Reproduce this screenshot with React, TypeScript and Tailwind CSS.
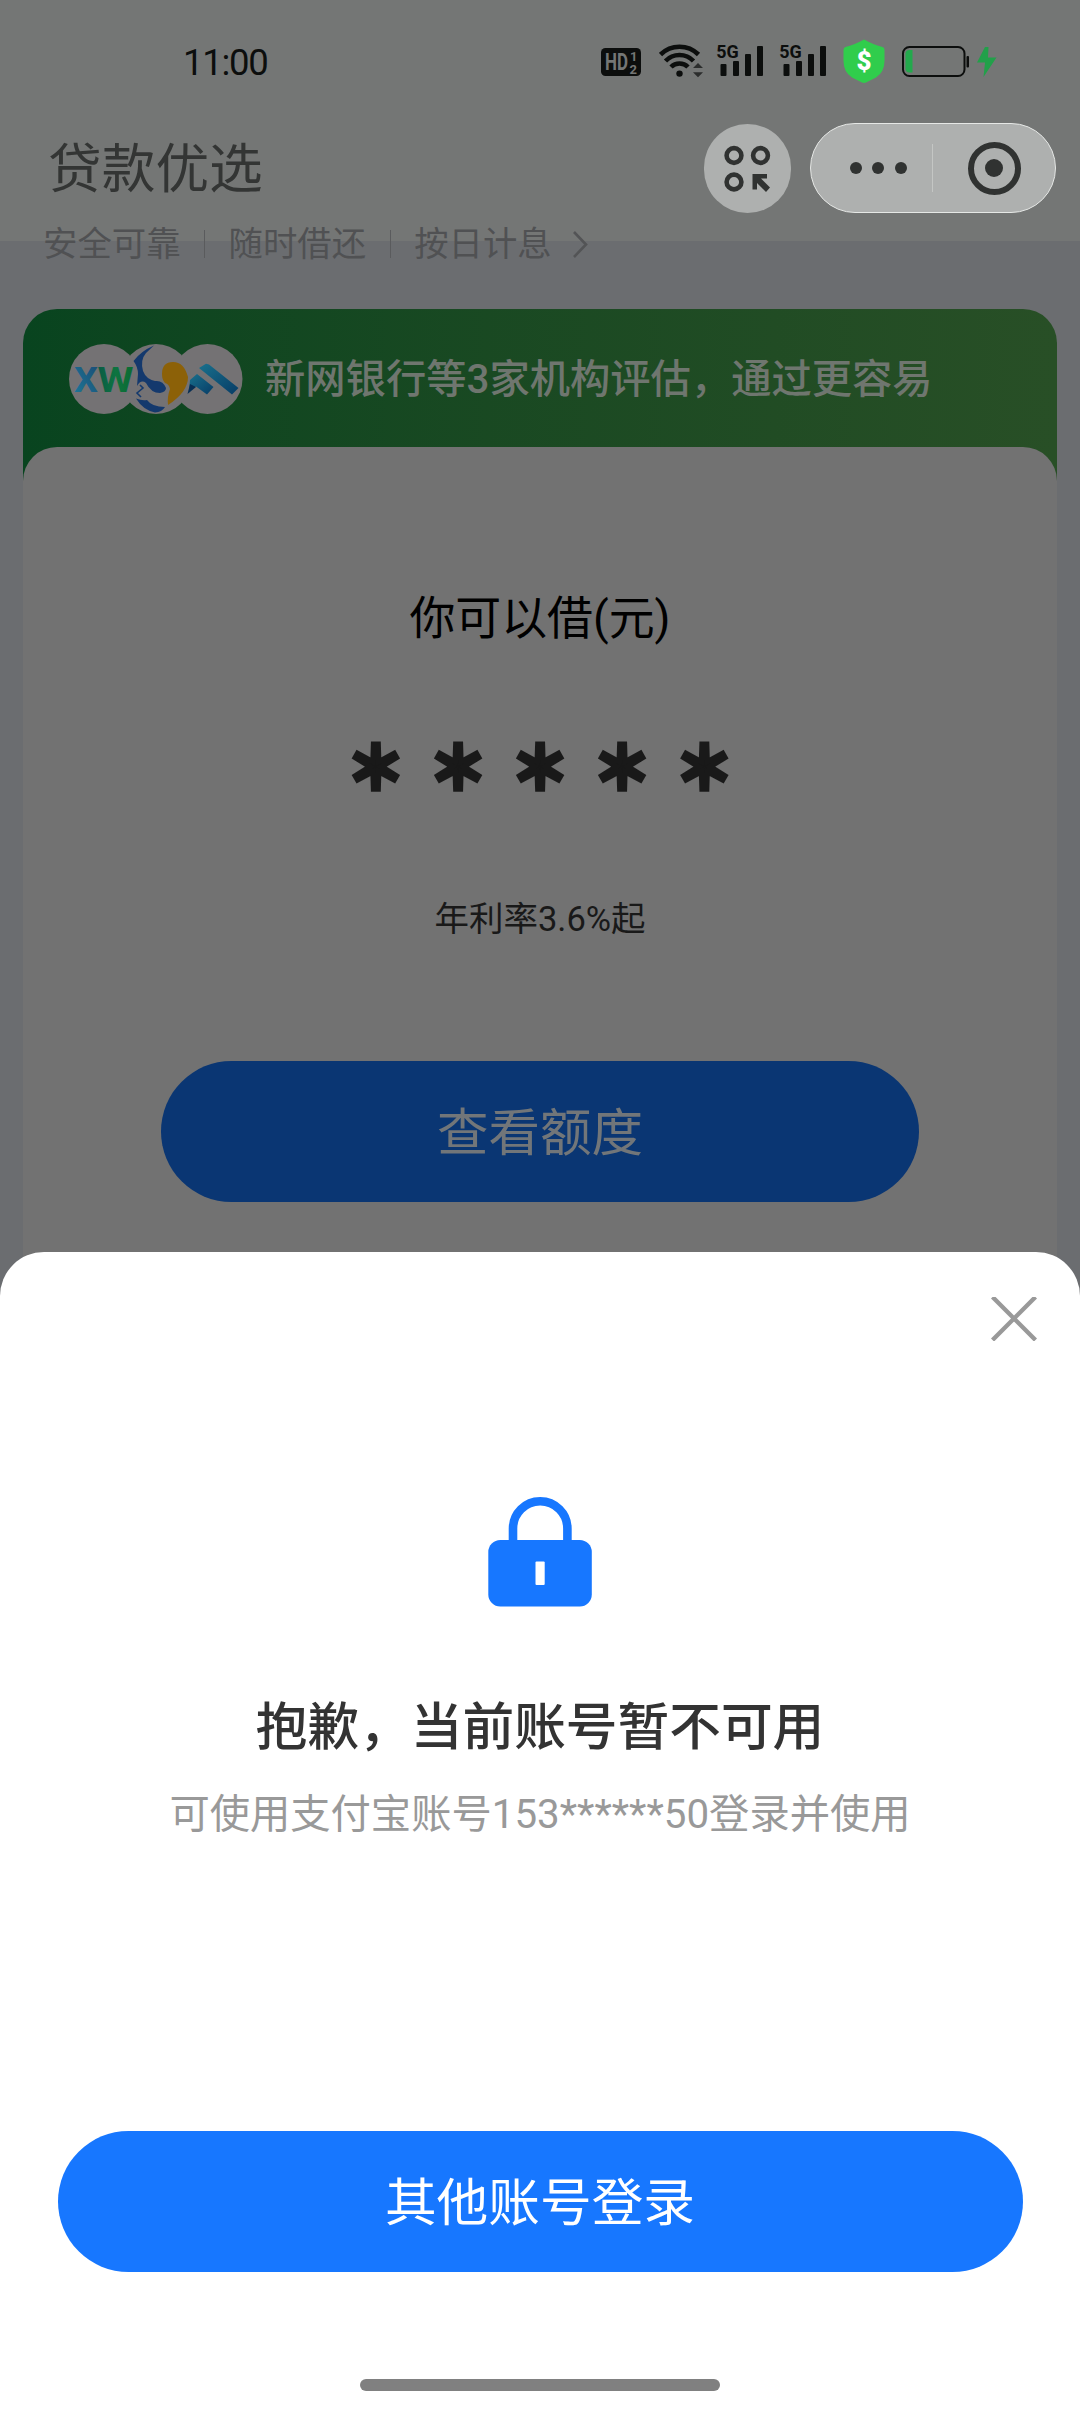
import React from 'react';

const INK = '#0c0e0d';

function HdIcon() {
  return (
    <svg className="h-[52px] w-[40px]" viewBox="0 0 40 52">
      <rect x="0" y="12" width="40" height="28" rx="4.5" fill={INK} />
      <text x="4" y="34" fontSize="23" fontWeight="700" fill="#747675" fontFamily="Roboto" textLength="23" lengthAdjust="spacingAndGlyphs">HD</text>
      <text x="29" y="25" fontSize="13" fontWeight="700" fill="#747675" fontFamily="Roboto">1</text>
      <text x="28.5" y="37.5" fontSize="13" fontWeight="700" fill="#747675" fontFamily="Roboto">2</text>
    </svg>
  );
}

function WifiIcon() {
  return (
    <svg className="ml-[18px] h-[52px] w-[44px]" viewBox="659 36 44 52" fill="none" stroke={INK}>
      <path d="M660.5 54.5 A27 27 0 0 1 698.5 54.5" strokeWidth="4.6" />
      <path d="M665.5 61 A19.5 19.5 0 0 1 693.5 61" strokeWidth="4.6" />
      <path d="M671 67 A12 12 0 0 1 688 67" strokeWidth="4.6" />
      <circle cx="679.5" cy="73.6" r="3.2" fill={INK} stroke="none" />
      <path d="M693 68 l5 -5 l5 5z M693 72.3 l5 5 l5 -5z" fill="#2b2d2c" stroke="none" />
    </svg>
  );
}

function SignalIcon() {
  return (
    <svg className="h-[52px] w-[47px]" viewBox="716 36 47 52" fill={INK}>
      <text x="716.3" y="58" fontSize="19" fontWeight="700" fontFamily="Roboto" textLength="22.5" lengthAdjust="spacingAndGlyphs">5G</text>
      <rect x="720.5" y="64" width="6" height="12" rx="1" />
      <rect x="733" y="61" width="6" height="15" rx="1" />
      <rect x="745" y="54" width="6" height="22" rx="1" />
      <rect x="757" y="46" width="6" height="30" rx="1" />
    </svg>
  );
}

function ShieldIcon() {
  return (
    <svg className="ml-[17px] h-[52px] w-[42px]" viewBox="843 36 42 52">
      <path d="M864 39.5 Q874 45 882.5 47 Q884.5 47.6 884.5 50 V61 Q884.5 72 876 77.5 L866 82.5 Q864 83.4 862 82.5 L852 77.5 Q843.5 72 843.5 61 V50 Q843.5 47.6 845.5 47 Q854 45 864 39.5Z" fill="#30cd4c" />
      <text x="864" y="69.5" textAnchor="middle" fontSize="26" fontWeight="900" fill="#fff" fontFamily="Roboto">$</text>
    </svg>
  );
}

function BatteryIcon() {
  return (
    <svg className="ml-[16px] h-[52px] w-[98px]" viewBox="901 36 98 52">
      <rect x="903" y="47" width="61.5" height="29" rx="6.5" fill="none" stroke={INK} strokeWidth="2" />
      <rect x="966.5" y="56" width="2.5" height="11.5" rx="1" fill={INK} />
      <path d="M912.5 50 V72.5 H909.5 Q905.5 72.5 905.5 68.5 V54 Q905.5 50 909.5 50Z" fill="#23a94c" />
      <path d="M985 47 L977 62.5 H985 L983.5 77 L996.5 57.5 H988 L988.5 47Z" fill="#22a04a" />
    </svg>
  );
}

function StatusBar() {
  return (
    <div className="flex h-[88px] pt-[36px] pl-[183px]">
      <div className="h-[52px] w-[418px] text-[36.5px] leading-[54px] tracking-[-1.3px] text-[#0c0e0d]">11:00</div>
      <HdIcon />
      <WifiIcon />
      <div className="ml-[13px] flex gap-[16px]">
        <SignalIcon />
        <SignalIcon />
      </div>
      <ShieldIcon />
      <BatteryIcon />
    </div>
  );
}

function NavBar() {
  return (
    <div className="mt-[35px] flex h-[90px] items-center pr-[24px] pl-[48px]">
      <h1 className="flex-1 pt-[3px] text-[53.7px] leading-[60px] font-normal text-[#333534]">贷款优选</h1>
      <button className="h-[89px] w-[87px] rounded-full bg-[#aeb0af]">
        <svg className="h-[89px] w-[87px]" viewBox="704.5 123 87 89" fill="none" stroke="#303231" strokeWidth="4.6">
          <circle cx="734.5" cy="154.5" r="7.4" />
          <circle cx="761" cy="154.5" r="7.4" />
          <circle cx="734.5" cy="181" r="7.4" />
          <path d="M753 173 H767.5 V177.5 H761.5 L770.5 186.5 L766.5 191 L757.5 182 V188.5 H753Z" fill="#303231" stroke="none" />
        </svg>
      </button>
      <div className="ml-[19px] flex h-[90px] w-[246px] items-center rounded-full border border-[#e6e8e6] bg-[#aeb0af]">
        <div className="flex w-[121px] justify-center gap-[10.5px] pl-[13px]">
          <span className="size-[12px] rounded-full bg-[#303231]" />
          <span className="size-[12px] rounded-full bg-[#303231]" />
          <span className="size-[12px] rounded-full bg-[#303231]" />
        </div>
        <div className="h-[48px] w-px bg-[#c4c6c4]" />
        <div className="ml-[34.5px] flex size-[53px] items-center justify-center rounded-full border-[6px] border-[#303231]">
          <span className="size-[18px] rounded-full bg-[#303231]" />
        </div>
      </div>
    </div>
  );
}

function Tagline() {
  return (
    <div className="relative -mt-[17px] flex h-[40px] items-center pl-[43px] text-[34.4px] leading-[40px] text-[#505153]">
      <span>安全可靠</span>
      <span className="mx-[23.5px] h-[28px] w-px bg-[#5a5b5d]" />
      <span>随时借还</span>
      <span className="mx-[23.5px] h-[28px] w-px bg-[#5a5b5d]" />
      <span>按日计息</span>
      <svg className="ml-[20px] h-[28px] w-[16px]" viewBox="0 0 16 28" fill="none" stroke="#535456" strokeWidth="2.6">
        <path d="M2 2 L14 14.5 L2 27" />
      </svg>
    </div>
  );
}

function BankLogos() {
  return (
    <svg className="h-[70px] w-[174px]" viewBox="69 344 174 70">
      <defs>
        <linearGradient id="roof" x1="0" x2="1" y1="0" y2="1">
          <stop offset="0" stopColor="#19708c" />
          <stop offset="1" stopColor="#073c66" />
        </linearGradient>
        <linearGradient id="letterX" x1="0" x2="1" y1="1" y2="0">
          <stop offset="0" stopColor="#1d7a99" />
          <stop offset="1" stopColor="#1a4a74" />
        </linearGradient>
        <linearGradient id="letterW" x1="0" x2="1">
          <stop offset="0" stopColor="#0a5a45" />
          <stop offset="0.5" stopColor="#0d7440" />
          <stop offset="1" stopColor="#0c6a30" />
        </linearGradient>
      </defs>
      <circle cx="104" cy="379" r="35" fill="#747274" />
      <circle cx="207.5" cy="379" r="35" fill="#747274" />
      <circle cx="156" cy="379" r="35" fill="#747274" />
      <text x="74" y="391.5" fontSize="35" fontWeight="700" fontFamily="Roboto" fill="url(#letterX)" textLength="24" lengthAdjust="spacingAndGlyphs">X</text>
      <text x="97.5" y="391.5" fontSize="35" fontWeight="700" fontFamily="Roboto" fill="url(#letterW)" textLength="36" lengthAdjust="spacingAndGlyphs">W</text>
      <path d="M154 345.5 Q141 351 133.5 361 Q138 367 138 374 L137 386 Q141 379 146 383 Q151 393 160 393 Q166 392 166 388 Q163 380 155 381 Q146 379 143 371 Q140 360 146 353 Z" fill="#14396d" />
      <path d="M140 385 L143 388 L137 393 L141 397" stroke="#14396d" strokeWidth="1.6" fill="none" />
      <path d="M136 398.5 Q142 401 147 400 Q152 407 165 407 Q162 412 155 412.500 Q143 410 136 398.5Z" fill="#14396d" />
      <path d="M162 374 Q162 362 173 362 Q184 362 188 377 Q188 392 168 405 Q167 397 170 389 Q169 384 165 383 Q162 380 162 374Z" fill="#8c6108" />
      <path d="M199 368 L206 363.8 L209 364.500 L238.500 388 L232 394.500Z" fill="url(#roof)" />
      <path d="M190 380 L197 374 L213.500 387 L207 394.500 L196 386.500 L189 390 Z" fill="url(#roof)" />
      <path d="M187.500 394 L190 384 L196 387Z" fill="#082f54" />
    </svg>
  );
}

function LoanCard() {
  return (
    <section className="mx-[23px] mt-[45px] rounded-t-[34px] bg-linear-to-r from-[#08441f] to-[#284f26]">
      <div className="flex h-[138px] items-center pt-[2px] pl-[46px]">
        <BankLogos />
        <p className="ml-[22px] pt-[2px] text-[40.3px] leading-[50px] font-medium text-[#6f766f]">新网银行等3家机构评估，通过更容易</p>
      </div>
      <div className="flex h-[900px] flex-col items-center rounded-t-[34px] bg-[#727272]">
        <p className="mt-[142.5px] text-[45.9px] leading-[56px] text-black">你可以借(元)</p>
        <p className="mt-[82.5px] pl-[24.100px] text-[58px] leading-[82px] font-bold tracking-[24.1px] text-[#191919] [-webkit-text-stroke:5.5px_#191919]">＊＊＊＊＊</p>
        <p className="mt-[86.5px] text-[34.5px] leading-[44px] text-[#191919]">年利率3.6%起</p>
        <button className="mt-[120px] h-[141px] w-[758px] rounded-full bg-[#0a3673] pt-[5px] text-[51.5px] leading-[60px] text-[#727679]">查看额度</button>
      </div>
    </section>
  );
}

function LockIcon() {
  return (
    <svg className="mt-[245px] h-[110px] w-[104px]" viewBox="488 1497 104 110">
      <path d="M513 1545 V1528.5 A27.2 27.2 0 0 1 567.4 1528.5 V1545" fill="none" stroke="#1777ff" strokeWidth="8.6" />
      <rect x="488.3" y="1540" width="103.5" height="66.5" rx="12" fill="#1777ff" />
      <rect x="535.5" y="1561.5" width="9.2" height="23.5" rx="1" fill="#fff" />
    </svg>
  );
}

function AccountSheet() {
  return (
    <div className="absolute inset-x-0 top-[1252px] bottom-0 flex flex-col items-center rounded-t-[44px] bg-white">
      <button className="absolute top-[45px] right-[43px] h-[44px] w-[46px]" aria-label="关闭">
        <svg className="h-[44px] w-[46px]" viewBox="0 0 46 44" stroke="#999" strokeWidth="4.4">
          <path d="M1.5 0 L44.5 43 M44.5 0 L1.5 43" />
        </svg>
      </button>
      <LockIcon />
      <h2 className="mt-[91px] text-[51.7px] leading-[60px] font-medium text-[#333]">抱歉，当前账号暂不可用</h2>
      <p className="mt-[31.5px] text-[40.3px] leading-[50px] text-[#999]">可使用支付宝账号153******50登录并使用</p>
      <button className="mt-[291.5px] h-[141px] w-[965px] rounded-full bg-[#1777ff] pt-[4px] text-[51.7px] leading-[60px] text-white">其他账号登录</button>
      <div className="mt-[107px] h-[12px] w-[360px] rounded-full bg-[#808080]" />
    </div>
  );
}

export default function App() {
  return (
    <main className="relative h-[2412px] w-[1080px] overflow-hidden bg-[#6b6d70] font-[Roboto,'Noto_Sans_CJK_SC',sans-serif]">
      <header className="h-[241px] bg-[#747675]">
        <StatusBar />
        <NavBar />
      </header>
      <Tagline />
      <LoanCard />
      <AccountSheet />
    </main>
  );
}
